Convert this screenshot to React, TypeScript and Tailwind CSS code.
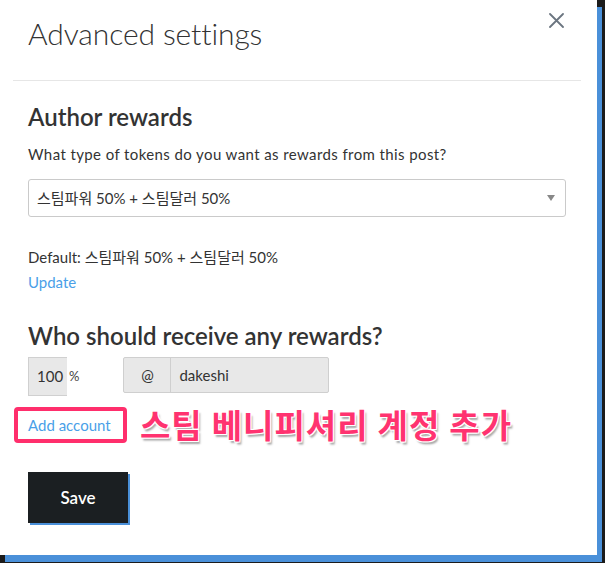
import React from "react";

const font = { fontFamily: 'Lato, "Noto Sans CJK KR", sans-serif' };

export default function App() {
  return (
    <div className="w-[605px] h-[563px] bg-[#1b1b1b] overflow-hidden" style={font}>
      <div className="w-[597px] h-[555px] bg-white shadow-[5px_7px_0_#4a90d9] flex flex-col text-[#333]">
        {/* header */}
        <div className="flex items-start justify-between pl-[28px] pr-[33px] h-[80px]">
          <h1 className="text-[30px] leading-[40px] font-light mt-[13px] tracking-[-0.1px]">Advanced settings</h1>
          <button className="mt-[13px] w-[15px] h-[15px] text-[#6b7580]">
            <svg viewBox="0 0 15 15" width="15" height="15">
              <path d="M1 1 L14 14 M14 1 L1 14" stroke="currentColor" strokeWidth="1.8" strokeLinecap="round" />
            </svg>
          </button>
        </div>
        <div className="ml-[13px] mr-[16px] h-px bg-[#e6e6e6]" />

        <div className="pl-[28px] pr-[31px] flex flex-col">
          <h2 className="text-[24px] leading-[30px] font-semibold mt-[21px]">Author rewards</h2>
          <p className="text-[15px] leading-[20px] mt-[12px] tracking-[0.4px]">What type of tokens do you want as rewards from this post?</p>
          <div className="mt-[15px] h-[38px] border border-[#cacaca] rounded-[3px] flex items-center justify-between pl-[8px] pr-[10px]">
            <span className="text-[15px]">스팀파워 50% + 스팀달러 50%</span>
            <span className="w-0 h-0 border-l-[4px] border-r-[4px] border-t-[6px] border-l-transparent border-r-transparent border-t-[#888]" />
          </div>
          <p className="text-[15px] leading-[20px] mt-[30px]">Default: 스팀파워 50% + 스팀달러 50%</p>
          <a className="text-[15px] leading-[20px] mt-[5px] text-[#4a9fe8] w-fit">Update</a>

          <h2 className="text-[24px] leading-[30px] font-semibold mt-[29px]">Who should receive any rewards?</h2>
          <div className="flex items-start mt-[6px]">
            <div className="w-[39px] h-[39px] bg-[#e8e8e8] border border-[#d0d0d0] border-r-0 flex items-end pb-[8px] pl-[8px] text-[15px]">100</div>
            <span className="text-[13px] ml-[2px] mt-[10px] text-[#444]">%</span>
            <div className="ml-[44px] w-[206px] h-[36px] bg-[#e8e8e8] border border-[#cfcfcf] rounded-[2px] flex">
              <div className="w-[47px] flex items-center justify-center text-[15px] border-r border-[#cfcfcf]">@</div>
              <div className="flex items-center pl-[8px] text-[15px]">dakeshi</div>
            </div>
          </div>
          <div className="flex items-center mt-[11px] -ml-[14px]">
            <div className="w-[113px] h-[36px] border-[4px] border-[#ff2e6c] rounded-[4px] flex items-center pl-[10px]">
              <a className="text-[15px] text-[#4a9fe8]">Add account</a>
            </div>
            <span
              className="ml-[13px] text-[33px] font-bold text-[#ff3370] leading-[36px] tracking-[1px]"
              style={{ textShadow: "0 0 2px #fff, 1px 1px 0 #fff, -1px -1px 0 #fff, 1px -1px 0 #fff, -1px 1px 0 #fff, 2px 3px 2px rgba(0,0,0,0.35)" }}
            >
              스팀 베니피셔리 계정 추가
            </span>
          </div>
          <button className="mt-[29px] w-[100px] h-[51px] bg-[#1b1f22] text-white text-[17px] font-semibold shadow-[2px_2px_0_#4a90d9]">Save</button>
        </div>
      </div>
    </div>
  );
}
